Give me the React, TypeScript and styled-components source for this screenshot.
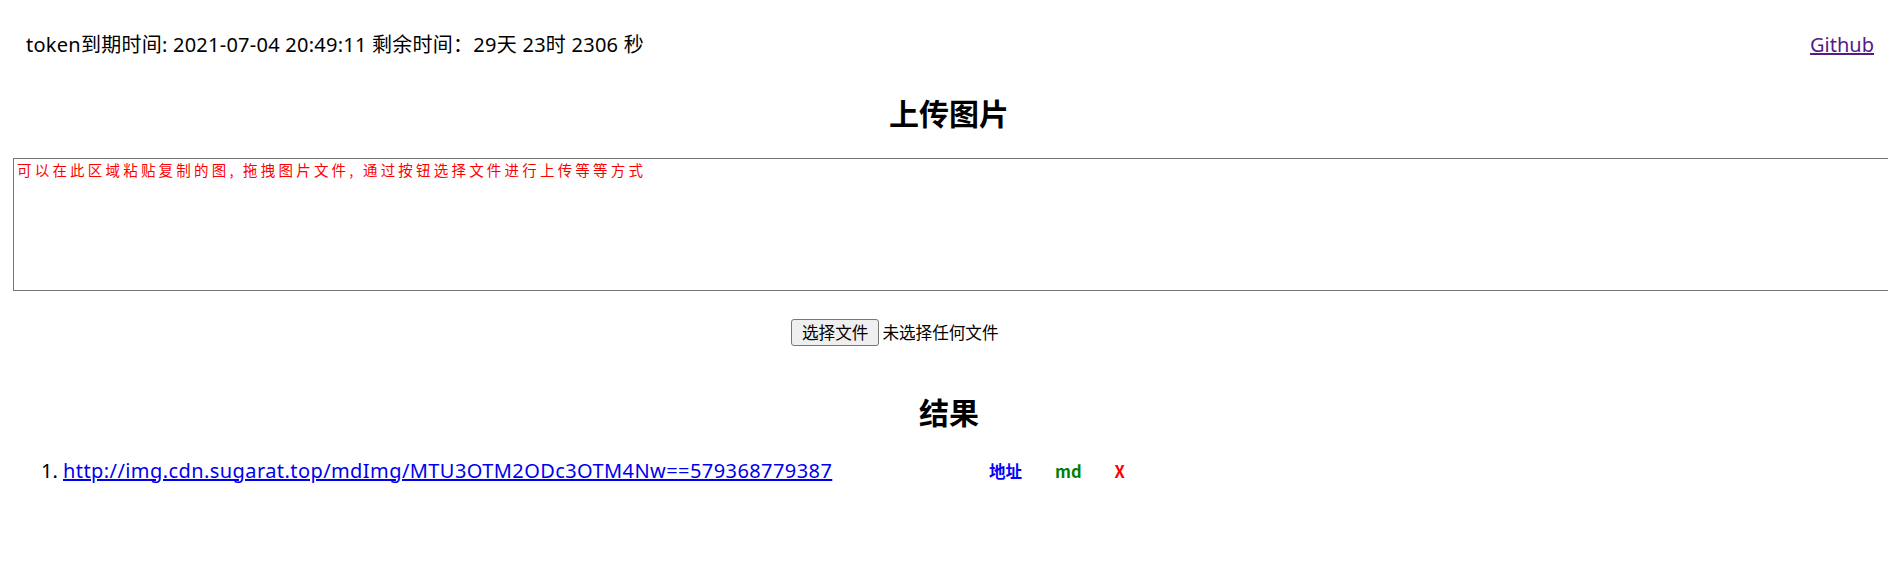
import React from "react";
import styled, { createGlobalStyle } from "styled-components";

const GlobalStyle = createGlobalStyle`
  html, body {
    margin: 0;
    padding: 0;
    overflow: hidden;
    background: #ffffff;
  }
  body {
    font-family: "Noto Sans", "Noto Sans CJK SC", sans-serif;
    font-size: 20px;
    color: #000000;
  }
`;

const Header = styled.header`
  display: flex;
  justify-content: space-between;
  align-items: center;
  padding: 32px 14px 0 26px;
  line-height: 26px;
`;

const Expire = styled.div`
  white-space: nowrap;
  letter-spacing: 0.25px;
`;

const RepoLink = styled.a`
  color: #551a8b;
  text-decoration: underline;
`;

const Main = styled.main`
  padding-left: 10px;
`;

const Title = styled.h2<{ $top: number }>`
  margin: ${(p) => p.$top}px 0 0;
  font-size: 30px;
  line-height: 40px;
  font-weight: 700;
  text-align: center;
`;

const PasteArea = styled.textarea`
  display: block;
  box-sizing: border-box;
  margin: 24px 0 0 3px;
  width: calc(100% + 40px);
  height: 133px;
  padding: 1px 3px;
  border: 1px solid #767676;
  border-radius: 0;
  resize: none;
  outline: none;
  font-family: "Noto Sans CJK SC", monospace;
  font-size: 14.5px;
  font-weight: 400;
  letter-spacing: 3.2px;
  line-height: 20px;
  color: #000;
  &::placeholder {
    color: #ff0000;
    opacity: 1;
  }
`;

const FileRow = styled.div`
  margin-top: 27px;
  text-align: center;
`;

const FilePicker = styled.label`
  display: inline-flex;
  align-items: center;
  width: 316px;
  font-family: "Noto Sans CJK SC", sans-serif;
  font-size: 16.6px;
  cursor: default;
`;

const PickButton = styled.span`
  display: inline-flex;
  align-items: center;
  justify-content: center;
  box-sizing: border-box;
  height: 27px;
  padding: 0 10px;
  border: 1px solid #767676;
  border-radius: 3px;
  background: #efefef;
  color: #000;
`;

const FileName = styled.span`
  margin-left: 3px;
  color: #000;
`;

const ResultList = styled.ol`
  margin: 25px 0 0;
  padding-left: 53px;
  line-height: 26px;
`;

const ResultItem = styled.li`
  white-space: nowrap;
`;

const LinkCell = styled.span`
  display: inline-block;
  width: 926px;
`;

const ImageLink = styled.a`
  color: #0000ee;
  text-decoration: underline;
  letter-spacing: 0.42px;
`;

const Actions = styled.span`
  display: inline-flex;
  gap: 33px;
  font-family: "Noto Sans CJK SC", sans-serif;
  font-size: 16.5px;
  font-weight: 700;
  vertical-align: top;
`;

const Action = styled.span<{ $color: string }>`
  color: ${(p) => p.$color};
  cursor: pointer;
`;

const results = [
  "http://img.cdn.sugarat.top/mdImg/MTU3OTM2ODc3OTM4Nw==579368779387",
];

export default function App() {
  return (
    <>
      <GlobalStyle />
      <Header>
        <Expire>token到期时间: 2021-07-04 20:49:11 剩余时间：29天 23时 2306 秒</Expire>
        <RepoLink href="#">Github</RepoLink>
      </Header>
      <Main>
        <Title $top={36}>上传图片</Title>
        <PasteArea placeholder="可以在此区域粘贴复制的图, 拖拽图片文件, 通过按钮选择文件进行上传等等方式" />
        <FileRow>
          <FilePicker>
            <PickButton>选择文件</PickButton>
            <FileName>未选择任何文件</FileName>
          </FilePicker>
        </FileRow>
        <Title $top={47}>结果</Title>
        <ResultList>
          {results.map((url) => (
            <ResultItem key={url}>
              <LinkCell>
                <ImageLink href="#">{url}</ImageLink>
              </LinkCell>
              <Actions>
                <Action $color="#0000ff">地址</Action>
                <Action $color="#008000">md</Action>
                <Action $color="#ff0000">X</Action>
              </Actions>
            </ResultItem>
          ))}
        </ResultList>
      </Main>
    </>
  );
}
